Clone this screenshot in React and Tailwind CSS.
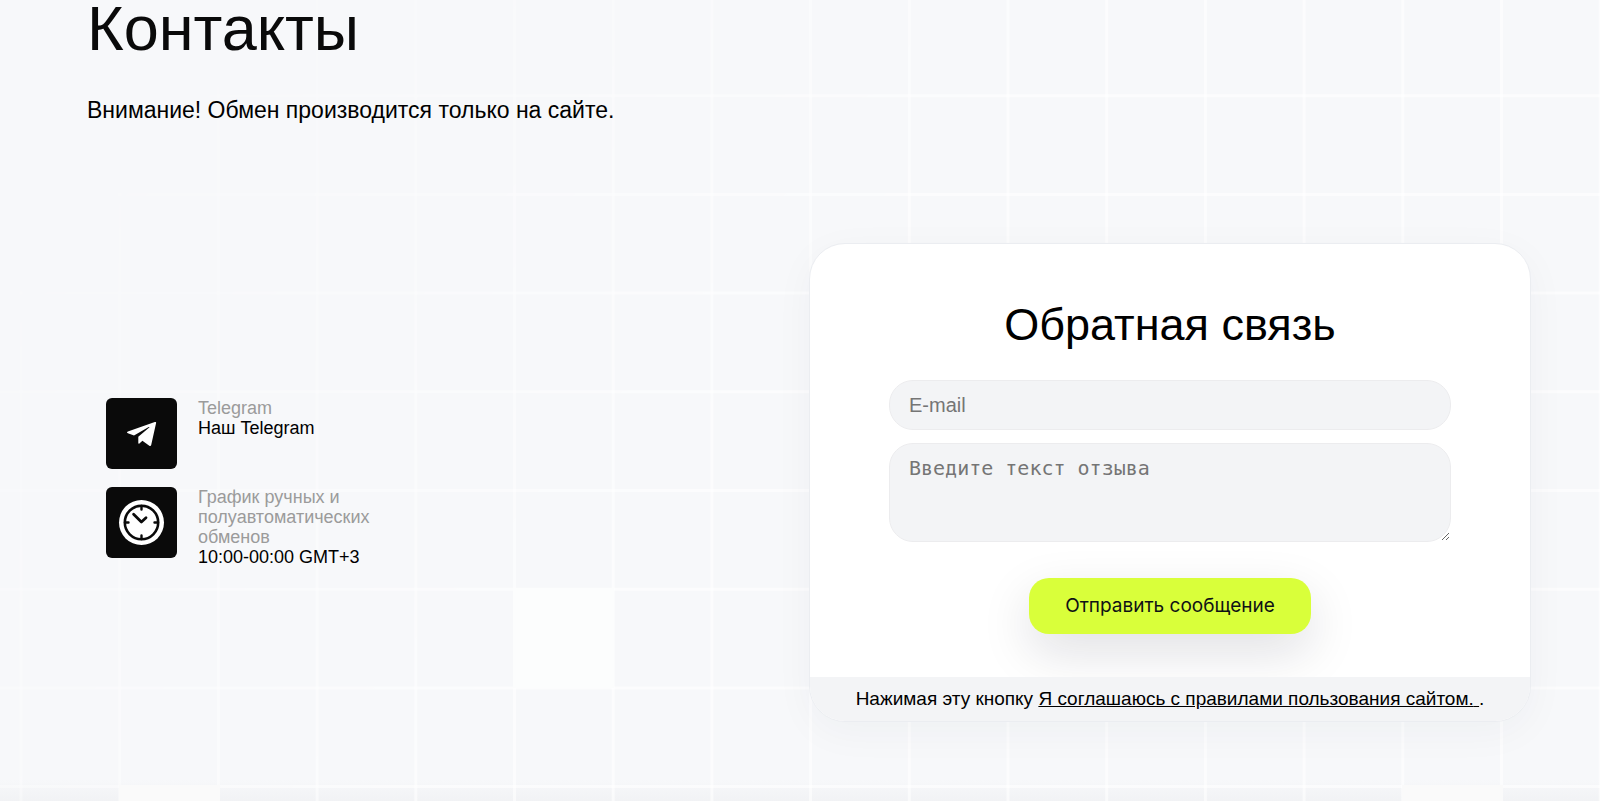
import { useId } from 'react'

const STEP = 98.7
const COLUMNS = Array.from({ length: 17 }, (_, i) => 21 + i * STEP)
const ROWS = Array.from({ length: 9 }, (_, i) => -3 + i * STEP)

// Фоновая сетка: светлые линии и несколько залитых клеток, затухает к левому верхнему углу
function GridBackground() {
  const id = useId()
  return (
    <svg
      className="absolute inset-0 -z-10 h-full w-full"
      viewBox="0 0 1600 801"
      preserveAspectRatio="xMidYMid slice"
      aria-hidden="true"
    >
      <defs>
        <linearGradient id={`${id}-fade`} gradientUnits="userSpaceOnUse" x1="100" y1="0" x2="700" y2="500">
          <stop offset="0" stopColor="#fff" stopOpacity="0" />
          <stop offset="1" stopColor="#fff" stopOpacity="1" />
        </linearGradient>
        <linearGradient id={`${id}-floor`} x1="0" y1="0" x2="0" y2="1">
          <stop offset="0" stopColor="#e9eaed" stopOpacity="0" />
          <stop offset="1" stopColor="#e9eaed" stopOpacity="0.4" />
        </linearGradient>
        <mask id={`${id}-mask`} maskUnits="userSpaceOnUse" x="0" y="0" width="1600" height="801">
          <rect width="1600" height="801" fill={`url(#${id}-fade)`} />
        </mask>
      </defs>
      <rect y="780" width="1600" height="21" fill={`url(#${id}-floor)`} />
      <g mask={`url(#${id}-mask)`} stroke="#fff" strokeOpacity="0.6" strokeWidth="3">
        {COLUMNS.map((x) => (
          <line key={x} x1={x} x2={x} y1="0" y2="801" />
        ))}
        {ROWS.map((y) => (
          <line key={y} y1={y} y2={y} x1="0" x2="1600" />
        ))}
      </g>
      <rect x="513" y="588" width="101" height="100" fill="#fcfdfd" />
      <rect x="119" y="785" width="101" height="16" fill="#fafafa" />
      <rect x="1402" y="785" width="101" height="16" fill="#fafafa" />
    </svg>
  )
}

function TelegramIcon() {
  return (
    <svg className="h-[71px] w-[71px]" viewBox="0 0 71 71" fill="#fff" aria-hidden="true">
      <path d="M48.800 24.100L21.900 33.600c-1.200.4-1.200 1.300 0 1.700l6.100 2.200 14.700-8.500c.6-.3 1 .2.500.600L32.300 38.700v6.600c.3.500.7.500 1.100.1l3-2.600 6.900 4.900c.9.600 1.700.3 1.900-.8l4.900-21.900c.2-.8-.4-1.200-1.300-.9z" />
    </svg>
  )
}

function ClockIcon() {
  return (
    <svg className="h-[71px] w-[71px]" viewBox="0 0 71 71" fill="none" strokeLinecap="round" strokeLinejoin="round" aria-hidden="true">
      <circle cx="35.500" cy="35.500" r="22.500" fill="#fff" />
      <circle cx="35.500" cy="35.500" r="16.700" stroke="#0a0a0a" strokeWidth="2.600" />
      <path
        d="M35.500 19v3.500M35.500 48.500v3.500M19 35.500h3.500M48.500 35.500h3.500"
        stroke="#0a0a0a"
        strokeWidth="2.400"
      />
      <path d="M27.600 27.300l7.800 7.700 4.600-4.200" stroke="#0a0a0a" strokeWidth="2.800" />
    </svg>
  )
}

function Contact({ icon, label, children }) {
  return (
    <li className="flex items-start gap-[21px]">
      <div className="shrink-0 rounded-md bg-[#0a0a0a]">{icon}</div>
      <div className="w-[190px] text-lg leading-5">
        <p className="text-[#9b9b9b]">{label}</p>
        {children}
      </div>
    </li>
  )
}

function FeedbackForm() {
  return (
    <form
      className="overflow-hidden rounded-[36px] border border-[#ebedf1] bg-white shadow-[0_10px_40px_rgba(30,40,80,0.04)]"
      onSubmit={(e) => e.preventDefault()}
    >
      <div className="flex flex-col px-[79px] pt-[54px] pb-[43px]">
        <h2 className="text-center text-[45px] leading-[54px]">Обратная связь</h2>
        <input
          type="email"
          aria-label="E-mail"
          placeholder="E-mail"
          className="mt-7 h-[50px] rounded-3xl border border-[#ececee] bg-[#f3f4f6] px-[19px] text-xl placeholder:text-[#757575]"
        />
        <textarea
          aria-label="Введите текст отзыва"
          placeholder="Введите текст отзыва"
          className="mt-[13px] h-[99px] resize rounded-3xl border border-[#ececee] bg-[#f3f4f6] px-[19px] py-3 font-['DejaVu_Sans_Mono',monospace] text-xl leading-6 placeholder:text-[#757575]"
        />
        <button
          type="submit"
          className="mt-9 h-14 self-center rounded-[20px] bg-[#d9ff3a] px-9 font-[Inter,sans-serif] text-[19px] text-[#0f1115] shadow-[0_18px_50px_rgba(15,17,40,0.13)]"
        >
          Отправить сообщение
        </button>
      </div>
      <p className="relative bg-[#f3f4f6] py-[10px] text-center text-[19px] leading-6">
        Нажимая эту кнопку{' '}
        <a href="#rules" className="underline">
          Я соглашаюсь с правилами пользования сайтом.{' '}
        </a>
        .
      </p>
    </form>
  )
}

export default function App() {
  return (
    <main className="relative isolate min-h-screen bg-[#f7f8fa] pr-[69px] pl-[87px] font-['Liberation_Sans',Arial,sans-serif] text-black">
      <GridBackground />
      <h1 className="text-[63px] leading-14 text-[#0a0a0a]">Контакты</h1>
      <p className="mt-[38px] text-[23px] leading-8">Внимание! Обмен производится только на сайте.</p>
      <div className="mt-[117px] grid grid-cols-2 items-center">
        <ul className="flex flex-col gap-[18px] pl-[19px]">
          <Contact icon={<TelegramIcon />} label="Telegram">
            <a href="#telegram">Наш Telegram</a>
          </Contact>
          <Contact icon={<ClockIcon />} label="График ручных и полуавтоматических обменов">
            <p>10:00-00:00 GMT+3</p>
          </Contact>
        </ul>
        <FeedbackForm />
      </div>
    </main>
  )
}
